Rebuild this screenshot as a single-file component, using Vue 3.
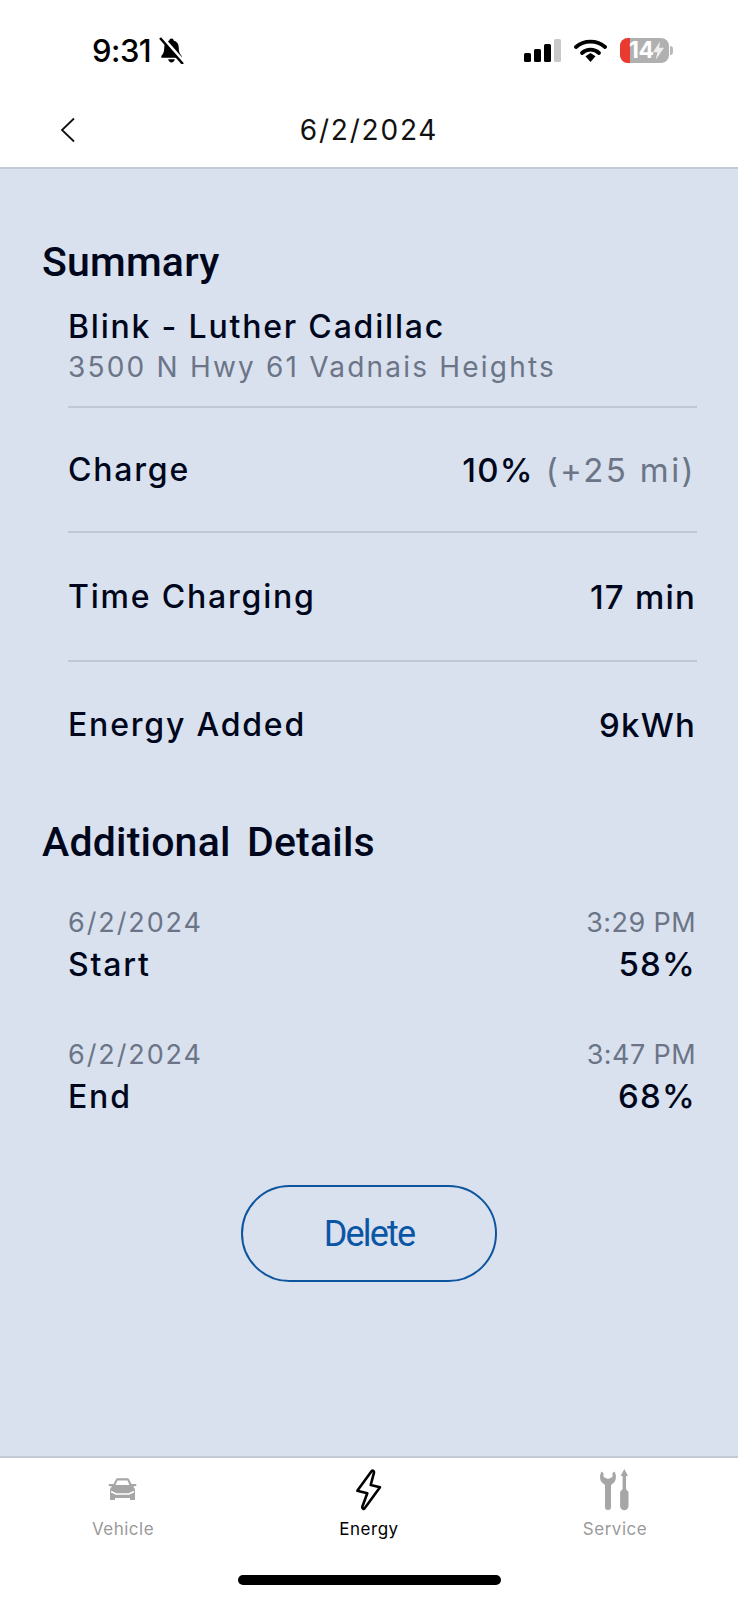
<script setup>
const summaryRows = [
  { label: 'Charge', value: '10%', extra: '(+25 mi)' },
  { label: 'Time Charging', value: '17 min' },
  { label: 'Energy Added', value: '9kWh' },
];

const detailRows = [
  { date: '6/2/2024', time: '3:29 PM', label: 'Start', value: '58%' },
  { date: '6/2/2024', time: '3:47 PM', label: 'End', value: '68%' },
];
</script>

<template>
  <div class="screen">
    <div class="status-bar">
      <div class="status-left">
        <span class="clock">9:31</span>
        <svg class="bell" width="27" height="27" viewBox="0 0 26 26">
          <path d="M13 1.500c1.200 0 2 .8 2.100 1.900 3.200.9 4.900 3.500 4.900 7 0 4 .8 5.500 2.800 8v1.600H3.200v-1.600c2-2.500 2.800-4 2.800-8 0-3.500 1.700-6.100 4.900-7C11 2.300 11.800 1.500 13 1.500z" fill="#000"/>
          <path d="M9.800 21.500h6.400c-.3 1.800-1.600 3-3.200 3s-2.900-1.200-3.200-3z" fill="#000"/>
          <path d="M3.500 0 25.500 25" stroke="#fff" stroke-width="3.600"/>
          <path d="M2 1 24 26" stroke="#000" stroke-width="2.400"/>
        </svg>
      </div>
      <div class="status-right">
        <svg width="37" height="23" viewBox="0 0 37 23">
          <rect x="0" y="14" width="7" height="9" rx="1.500" fill="#000"/>
          <rect x="10" y="10" width="7" height="13" rx="1.500" fill="#000"/>
          <rect x="20" y="5" width="7" height="18" rx="1.500" fill="#000"/>
          <rect x="30" y="0" width="7" height="23" rx="1.500" fill="#c9c9c9"/>
        </svg>
        <svg width="33" height="23" viewBox="0 0 33 23">
          <path d="M2 8C10 .8 23 .8 31 8" fill="none" stroke="#000" stroke-width="3.800" stroke-linecap="round"/>
          <path d="M8 14c5-4.400 12-4.400 17 0" fill="none" stroke="#000" stroke-width="3.800" stroke-linecap="round"/>
          <path d="M11.500 17.200 16.500 14l5 3.200-5 5.800z" fill="#000"/>
        </svg>
        <div class="battery">
          <div class="battery-body">
            <span class="battery-red"></span>
            <span class="battery-text">14</span>
            <svg class="battery-bolt" width="11" height="19" viewBox="0 0 10 17">
              <path d="M6.500 0 0 10h4l-1.500 7L10 6H5.500z" fill="#eee"/>
            </svg>
          </div>
          <span class="battery-cap"></span>
        </div>
      </div>
    </div>

    <header class="top-bar">
      <svg class="back" width="16" height="26" viewBox="0 0 16 26">
        <path d="M14 1.500 2 13l12 11.500" fill="none" stroke="#111" stroke-width="1.800"/>
      </svg>
      <span class="top-title">6/2/2024</span>
    </header>

    <main class="content">
      <h2 class="section-title">Summary</h2>
      <div class="place">
        <div class="place-name">Blink - Luther Cadillac</div>
        <div class="place-address">3500 N Hwy 61 Vadnais Heights</div>
      </div>
      <div class="summary-rows">
        <div v-for="row in summaryRows" :key="row.label" class="summary-row">
          <span class="row-label">{{ row.label }}</span>
          <span class="row-value">{{ row.value }}<span v-if="row.extra" class="row-extra">{{ row.extra }}</span></span>
        </div>
      </div>

      <h2 class="section-title details-title">Additional Details</h2>
      <div class="details">
        <div v-for="row in detailRows" :key="row.label" class="detail">
          <div class="detail-line small">
            <span class="detail-date">{{ row.date }}</span>
            <span class="detail-time">{{ row.time }}</span>
          </div>
          <div class="detail-line">
            <span class="row-label">{{ row.label }}</span>
            <span class="row-value">{{ row.value }}</span>
          </div>
        </div>
      </div>

      <button class="delete-btn" type="button">Delete</button>
    </main>

    <nav class="tab-bar">
      <div class="tab">
        <svg class="tab-icon" width="34" height="44" viewBox="0 0 34 44">
          <path d="M7.500 16 10 11.200q.5-.9 1.500-.9h10q1 0 1.500.9l2.500 4.800H30q1 1 0 2l-3 .5q2 1.500 2 3.500v10h-5v-2H9v2H4V22q0-2 2-3.500L3 18q-1-1 0-2z" fill="#a6a6a6"/>
          <path d="M9.500 17l2-4.500h10l2 4.500z" fill="#fff"/>
          <path d="M5 23.500 10 26h13l5-2.500" fill="none" stroke="#fff" stroke-width="1.500"/>
        </svg>
        <span class="tab-label">Vehicle</span>
      </div>
      <div class="tab active">
        <svg class="tab-icon" width="34" height="44" viewBox="0 0 34 44">
          <path d="M19.700 3 5.300 22.700l10 2.600-5 13.400c-.3 1.300 1.200 2.800 2 2L28 19.300 18.700 17l3.300-12.300c.2-1.500-1.400-2.800-2.300-1.700z" fill="none" stroke="#000" stroke-width="2.600" stroke-linejoin="round"/>
        </svg>
        <span class="tab-label">Energy</span>
      </div>
      <div class="tab">
        <svg class="tab-icon" width="34" height="44" viewBox="-1 0 34 44">
          <path d="M2.500 3.500C.5 7 .5 12 3 14.500L6 17v22a3 3 0 0 0 6 0V17l3-2.500c2.500-2.500 2.500-7.500.5-11L13.500 5v4L9 11 4.500 9V5z" fill="#a6a6a6"/>
          <path d="M25.300 1 29 8h-2v13l2.500 3v14a4.200 4.200 0 0 1-8.400 0V24l2.500-3V8h-2z" fill="#a6a6a6"/>
        </svg>
        <span class="tab-label">Service</span>
      </div>
      <div class="home-bar"></div>
    </nav>
  </div>
</template>

<style scoped>
.screen {
  width: 738px;
  height: 1600px;
  display: flex;
  flex-direction: column;
  background: #fff;
  font-family: "Inter", "Liberation Sans", sans-serif;
  color: #00071c;
  overflow: hidden;
}

.status-bar {
  height: 100px;
  flex: none;
  display: flex;
  justify-content: space-between;
  align-items: center;
  padding: 0 65px 0 92px;
}

.status-left {
  display: flex;
  align-items: center;
  gap: 7px;
}

.clock {
  font-size: 31px;
  font-weight: 500;
  letter-spacing: -0.5px;
  color: #000;
}

.status-right {
  display: flex;
  align-items: center;
  gap: 13px;
}

.battery {
  display: flex;
  align-items: center;
  gap: 1px;
}

.battery-body {
  position: relative;
  width: 49px;
  height: 25px;
  border-radius: 8px;
  background: #b0b0b0;
  display: flex;
  align-items: center;
  padding-left: 9px;
  box-sizing: border-box;
}

.battery-red {
  position: absolute;
  left: 0;
  top: 0;
  bottom: 0;
  width: 10px;
  border-radius: 8px 0 0 8px;
  background: #ea3a30;
}

.battery-text {
  position: relative;
  font-size: 23px;
  line-height: 25px;
  font-weight: 700;
  color: #fff;
  letter-spacing: -0.5px;
}

.battery-cap {
  width: 3px;
  height: 9px;
  border-radius: 0 3px 3px 0;
  background: #b8b8b8;
}

.top-bar {
  position: relative;
  height: 67px;
  flex: none;
  display: flex;
  align-items: center;
  justify-content: center;
  border-bottom: 2px solid #c3cad6;
}

.back {
  position: absolute;
  left: 60px;
  top: 17px;
}

.top-title {
  font-size: 28px;
  letter-spacing: 1.800px;
  color: #111;
  margin-top: -8px;
}

.content {
  flex: 1;
  background: #d9e1ee;
  padding: 66px 41px 0 42px;
  display: flex;
  flex-direction: column;
}

.section-title {
  margin: 0;
  font-family: "Roboto", sans-serif;
  font-size: 41px;
  line-height: 54px;
  font-weight: 500;
  letter-spacing: 0.2px;
  word-spacing: 6px;
}

.place {
  margin: 18px 0 0 26px;
  padding-bottom: 19px;
  border-bottom: 2px solid #c0c8d6;
}

.place-name,
.row-label {
  font-size: 32px;
  letter-spacing: 1.800px;
  font-weight: 500;
}

.row-value {
  font-size: 33px;
  letter-spacing: 1.200px;
  font-weight: 500;
}

.place-name {
  line-height: 40px;
}

.place-address {
  font-size: 28px;
  line-height: 40px;
  letter-spacing: 2.200px;
  color: #6c7587;
}

.summary-rows {
  margin-left: 26px;
}

.summary-row {
  height: 129px;
  box-sizing: border-box;
  display: flex;
  justify-content: space-between;
  align-items: center;
  border-bottom: 2px solid #c0c8d6;
  padding-right: 1px;
}

.summary-row:first-child {
  height: 125px;
}

.summary-row:last-child {
  border-bottom: none;
  padding-bottom: 4px;
}

.row-extra {
  margin-left: 12px;
  color: #6c7587;
  font-weight: 400;
  letter-spacing: 2.400px;
}

.details-title {
  margin-top: 24px;
}

.details {
  margin: 32px 0 0 26px;
  padding-right: 1px;
}

.detail + .detail {
  margin-top: 48px;
}

.detail-line {
  display: flex;
  justify-content: space-between;
  align-items: center;
  height: 42px;
}

.detail-line.small {
  font-size: 27px;
  color: #6c7587;
}

.detail-date {
  letter-spacing: 1.900px;
}

.detail-time {
  letter-spacing: 0.400px;
}

.delete-btn {
  align-self: center;
  margin: 68px 0 0 -1px;
  width: 256px;
  height: 97px;
  border: 2px solid #0e559f;
  border-radius: 49px;
  background: transparent;
  color: #0a56a5;
  font-family: "Roboto", sans-serif;
  font-size: 36px;
  font-weight: 400;
  letter-spacing: -1.800px;
}

.tab-bar {
  position: relative;
  height: 144px;
  flex: none;
  border-top: 2px solid #c3cad6;
  display: grid;
  grid-template-columns: repeat(3, 1fr);
  padding: 10px 0 0;
  box-sizing: border-box;
}

.tab {
  display: flex;
  flex-direction: column;
  align-items: center;
  color: #9a9a9a;
}

.tab.active {
  color: #000;
}

.tab-label {
  margin-top: 7px;
  font-size: 17px;
  letter-spacing: 0.500px;
}

.home-bar {
  position: absolute;
  left: 238px;
  bottom: 15px;
  width: 263px;
  height: 10px;
  border-radius: 5px;
  background: #000;
}
</style>

<style>
html, body {
  margin: 0;
  background: #fff;
}
</style>
